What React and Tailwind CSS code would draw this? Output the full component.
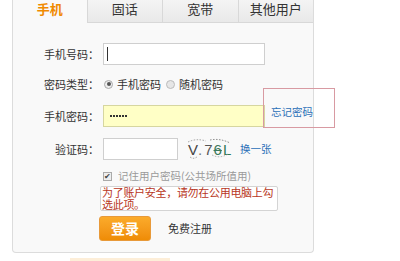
import React from "react";

const tabs = ["手机", "固话", "宽带", "其他用户"];

const Label = ({ children }) => (
  <div className="w-[90px] shrink-0 text-right pr-[4px] text-[11px] text-[#333]">{children}</div>
);

const Captcha = () => (
  <div className="relative w-[50px] h-[22px] flex items-center pl-[2px] text-[15px] leading-none font-['Liberation_Sans',sans-serif]">
    <span className="text-[#444]">V</span>
    <span className="text-[#777]">.</span>
    <span className="text-[#555] ml-[2px]">7</span>
    <span className="text-[#3d7a5c] line-through ml-[1px]">6</span>
    <span className="text-[#2f7a5a] ml-[1px]">L</span>
    <svg className="absolute left-0 top-0" width="50" height="22" viewBox="0 0 50 22" fill="none">
      <path d="M2 4 Q10 0 20 3" stroke="#888" strokeWidth="0.8" strokeDasharray="1.5 1.5" />
      <path d="M24 2 Q34 0 44 5" stroke="#666" strokeWidth="0.8" strokeDasharray="1.5 1.5" />
      <path d="M4 19 Q8 22 12 18" stroke="#888" strokeWidth="0.8" strokeDasharray="1.5 1.5" />
      <path d="M26 17 Q34 21 42 16" stroke="#999" strokeWidth="0.8" strokeDasharray="1.5 1.5" />
    </svg>
  </div>
);

export default function App() {
  return (
    <div className="w-[400px] h-[261px] bg-white overflow-hidden relative font-['Noto_Sans_CJK_SC','Noto_Sans',sans-serif]">
      <div className="ml-[12px] w-[302px] h-[253px] border border-t-0 border-[#dcdcdc] rounded-b-[4px] bg-[#f9f9f9] flex flex-col">
        <div className="flex h-[23px]">
          {tabs.map((t, i) => (
            <div
              key={t}
              className={
                i === 0
                  ? "w-[74px] h-[23px] flex justify-center pt-[1px] text-[13px] leading-[15px] text-[#f08a00] font-bold bg-[#f9f9f9]"
                  : "w-[76px] h-[23px] flex justify-center pt-[1px] text-[13px] leading-[15px] text-[#333] bg-gradient-to-b from-[#f4f4f4] to-[#e9e9e9] border-l border-b border-[#d8d8d8]"
              }
            >
              {t}
            </div>
          ))}
        </div>

        <div className="flex flex-col mt-[20px]">
          <div className="flex items-center h-[22px]">
            <Label>手机号码：</Label>
            <div className="w-[162px] h-[22px] border border-[#cfcfcf] bg-white flex items-center pl-[3px]">
              <div className="w-[1px] h-[14px] bg-[#333]" />
            </div>
          </div>

          <div className="flex items-center h-[16px] mt-[11px] text-[11px] text-[#333]">
            <Label>密码类型：</Label>
            <span className="w-[9px] h-[9px] rounded-full border border-[#aaa] bg-[#eee] flex items-center justify-center ml-[1px]">
              <span className="w-[4px] h-[4px] rounded-full bg-[#555]" />
            </span>
            <span className="ml-[4px]">手机密码</span>
            <span className="w-[9px] h-[9px] rounded-full border border-[#bbb] bg-[#e6e6e6] ml-[5px]" />
            <span className="ml-[4px]">随机密码</span>
          </div>

          <div className="flex items-center h-[22px] mt-[13px]">
            <Label>手机密码：</Label>
            <div className="w-[162px] h-[22px] border border-[#d6d6a0] bg-[#ffffc6] flex items-center gap-[1px] pl-[6px]">
              {[0, 1, 2, 3, 4, 5].map((d) => (
                <span key={d} className="w-[2px] h-[2px] bg-[#333]" />
              ))}
            </div>
          </div>

          <div className="flex items-center h-[22px] mt-[11px]">
            <Label>验证码：</Label>
            <div className="w-[75px] h-[22px] border border-[#cfcfcf] bg-white" />
            <div className="ml-[8px]">
              <Captcha />
            </div>
            <span className="ml-[4px] text-[10.5px] text-[#2a6fb7]">换一张</span>
          </div>

          <div className="flex items-center h-[14px] mt-[9px] pl-[90px] text-[10.5px] text-[#999]">
            <span className="w-[9px] h-[9px] border border-[#aaa] bg-[#eee] flex items-center justify-center text-[8px] leading-none text-[#444]">✔</span>
            <span className="ml-[6px]">记住用户密码(公共场所值用)</span>
          </div>

          <div className="ml-[87px] mt-[3px] w-[178px] h-[25px] border border-[#d4d4d4] rounded-[2px] bg-white px-[1px] text-[11px] tracking-[-0.3px] leading-[11.5px] text-[#b8361c]">
            为了账户安全，请勿在公用电脑上勾选此项。
          </div>

          <div className="flex items-center mt-[5px] pl-[86px]">
            <div className="w-[52px] h-[25px] rounded-[3px] bg-gradient-to-b from-[#fbab2a] to-[#ef8c05] border border-[#e89a3a] flex items-center justify-center text-[14px] text-white font-bold">
              登录
            </div>
            <span className="ml-[17px] text-[11px] text-[#333]">免费注册</span>
          </div>
        </div>
      </div>

      <div className="absolute left-[263px] top-[88px] w-[72px] h-[40px] border border-[#d89aa2] flex items-end pb-[7px] pl-[7px]">
        <span className="text-[10.5px] text-[#2a6fb7]">忘记密码</span>
      </div>

      <div className="absolute left-[70px] top-[258px] w-[100px] h-[3px] bg-[#fdeed8]" />
    </div>
  );
}
